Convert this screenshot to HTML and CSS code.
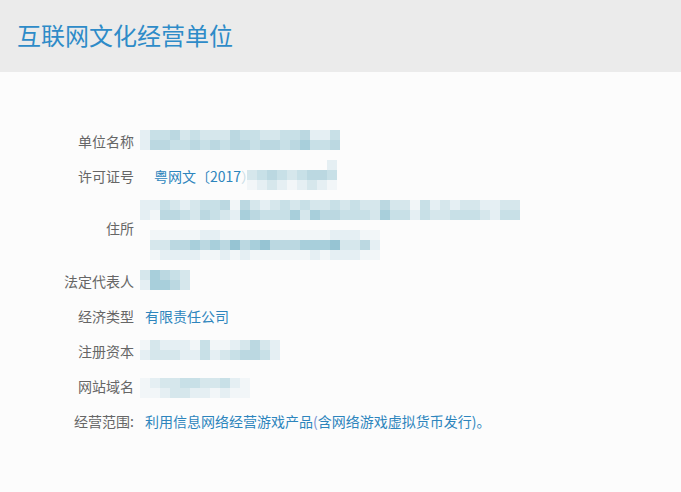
FILE: index.html
```html
<!DOCTYPE html>
<html lang="zh-CN">
<head>
<meta charset="utf-8">
<title>互联网文化经营单位</title>
<link rel="stylesheet" href="styles.css">
</head>
<body>
<header class="head"><h1 class="title">互联网文化经营单位</h1></header>
<main class="info">
  <div class="row">
    <div class="label">单位名称</div>
    <div class="value"><div class="mosaic mt7" data-m="24453433354433445224/25544545455455456445"></div></div>
  </div>
  <div class="row">
    <div class="label">许可证号</div>
    <div class="value"><span class="txt lic">粤网文〔2017</span><span class="fade">）</span><div class="mosaic lic-m" data-m="000000002/345434554/123212321"></div></div>
  </div>
  <div class="row tall">
    <div class="label">住所</div>
    <div class="value col">
      <div class="mosaic mt7" data-m="22432344515323434334343353314232332233/21554354326544463655444364424334443244"></div>
      <div class="mosaic line2" data-m="11111221111111111122211/33556565756755566673352/12222112121111112122211"></div>
    </div>
  </div>
  <div class="row">
    <div class="label">法定代表人</div>
    <div class="value"><div class="mosaic mt7" data-m="36543/26653"></div></div>
  </div>
  <div class="row">
    <div class="label">经济类型</div>
    <div class="value"><span class="txt">有限责任公司</span></div>
  </div>
  <div class="row">
    <div class="label">注册资本</div>
    <div class="value"><div class="mosaic mt7" data-m="13222141123532/23332242345542"></div></div>
  </div>
  <div class="row">
    <div class="label">网站域名</div>
    <div class="value"><div class="mosaic mt10" data-m="12334433421/11233221211"></div></div>
  </div>
  <div class="row">
    <div class="label">经营范围:</div>
    <div class="value"><span class="txt">利用信息网络经营游戏产品<span class="paren">(</span>含网络游戏虚拟货币发行)。</span></div>
  </div>
</main>
<script src="mosaic.js"></script>
</body>
</html>
```
FILE: styles.css
```css
html, body {
  margin: 0;
  padding: 0;
}
body {
  background: #fcfcfc;
  font-family: "Noto Sans CJK SC", "Noto Sans", sans-serif;
  width: 681px;
  height: 492px;
  overflow: hidden;
}
.head {
  background: #ebebeb;
  height: 72px;
  display: flex;
  align-items: center;
  padding-left: 17px;
}
.title {
  margin: 0;
  font-size: 24px;
  font-weight: normal;
  color: #2e8bc8;
  line-height: 1;
  position: relative;
  top: -1px;
}
.info {
  padding-top: 51px;
}
.row {
  display: grid;
  grid-template-columns: 134px 1fr;
  column-gap: 6px;
  height: 35px;
}
.row.tall {
  height: 70px;
}
.label {
  text-align: right;
  font-size: 14px;
  color: #666;
  align-self: center;
  line-height: 20px;
}
.value {
  display: flex;
  align-items: center;
  font-size: 14px;
  line-height: 20px;
}
.value.col {
  flex-direction: column;
  align-items: flex-start;
}
.txt {
  margin-left: 5px;
  color: #2d85bd;
}
.txt.lic {
  margin-left: 14px;
}
.fade {
  color: #c9dce6;
  font-size: 14px;
}
.paren {
  color: #7a8fd0;
}
.mosaic {
  display: flex;
  flex-direction: column;
  align-self: flex-start;
}
.mosaic .mrow {
  display: flex;
}
.mosaic .cell {
  width: 10px;
  height: 10px;
  flex: none;
}
.mt7 { margin-top: 7px; }
.mt10 { margin-top: 10px; }
.lic-m { margin-top: 2px; margin-left: -8px; }
.line2 { margin-top: 10px; margin-left: 10px; }
.c0 { background: transparent; }
.c1 { background: #f2f6f8; }
.c2 { background: #e5eff3; }
.c3 { background: #d6e7ec; }
.c4 { background: #c8e0e7; }
.c5 { background: #bbd8e1; }
.c6 { background: #a8cfdb; }
.c7 { background: #96c4d3; }
```
FILE: mosaic.js
```js
document.querySelectorAll('.mosaic').forEach(function (m) {
  m.getAttribute('data-m').split('/').forEach(function (r) {
    var row = document.createElement('div');
    row.className = 'mrow';
    r.split('').forEach(function (ch) {
      var c = document.createElement('span');
      c.className = 'cell c' + ch;
      row.appendChild(c);
    });
    m.appendChild(row);
  });
});
```
